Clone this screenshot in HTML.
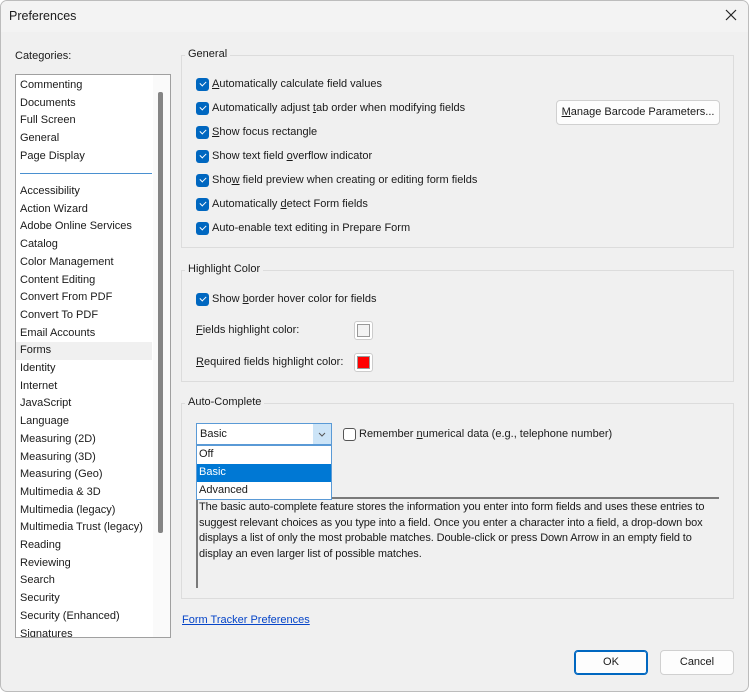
<!DOCTYPE html>
<html><head><meta charset="utf-8"><style>
*{box-sizing:border-box;margin:0;padding:0}
body{width:750px;height:693px;background:#fff;font-family:"Liberation Sans",sans-serif;font-size:11px;color:#1a1a1a;position:relative;overflow:hidden}
.win{position:absolute;left:0;top:0;width:749px;height:692px;background:#f0f0f0;border:1px solid #bcbcbc;border-radius:7px;overflow:hidden}
.title{position:absolute;left:0;top:0;width:100%;height:31px;background:#f3f3f3}
.a{position:absolute;white-space:nowrap}
.grp{position:absolute;border:1px solid #dcdcdc}
.gl{position:absolute;background:#f0f0f0;padding:0 3px;white-space:nowrap}
.cb{position:absolute;width:13px;height:13px;background:#0067c0;border-radius:3px}
.cb::after{content:"";position:absolute;left:3.5px;top:2.5px;width:5px;height:3px;border-left:1.3px solid #fff;border-bottom:1.3px solid #fff;transform:rotate(-45deg)}
.list{position:absolute;left:14px;top:73px;width:156px;height:564px;background:#fff;border:1px solid #a0a0a0;overflow:hidden}
.list div{position:absolute;left:4px;white-space:nowrap}
u{text-decoration:underline}
.btn{position:absolute;background:#fdfdfd;border:1px solid #d0d0d0;border-radius:4px;text-align:center}
</style></head><body>
<div class="win">
<div class="title"></div>
<div class="a" style="left:8px;top:8px;font-size:12.5px">Preferences</div>
<svg class="a" style="left:723px;top:7px" width="14" height="14" viewBox="0 0 14 14"><path d="M2 2L12 12M12 2L2 12" stroke="#222" stroke-width="1.2"/></svg>
<div class="a" style="left:14px;top:49px">Categories:</div>
<div class="list">
<div style="top:4px">Commenting</div><div style="top:21.7px">Documents</div><div style="top:39.4px">Full Screen</div><div style="top:57px">General</div><div style="top:74.8px">Page Display</div>
<div style="left:4px;top:98px;width:132px;height:1px;background:#4a90d0"></div>
<div style="top:110px">Accessibility</div><div style="top:127.7px">Action Wizard</div><div style="top:145.4px">Adobe Online Services</div><div style="top:163.1px">Catalog</div><div style="top:180.8px">Color Management</div><div style="top:198.5px">Content Editing</div><div style="top:216.2px">Convert From PDF</div><div style="top:233.9px">Convert To PDF</div><div style="top:251.6px">Email Accounts</div>
<div style="left:0;top:267px;width:136px;height:18px;background:#f0f0f0"></div><div style="top:269.3px">Forms</div>
<div style="top:287px">Identity</div><div style="top:304.7px">Internet</div><div style="top:322.4px">JavaScript</div><div style="top:340.1px">Language</div><div style="top:357.8px">Measuring (2D)</div><div style="top:375.5px">Measuring (3D)</div><div style="top:393.2px">Measuring (Geo)</div><div style="top:410.9px">Multimedia &amp; 3D</div><div style="top:428.6px">Multimedia (legacy)</div><div style="top:446.3px">Multimedia Trust (legacy)</div><div style="top:464px">Reading</div><div style="top:481.7px">Reviewing</div><div style="top:499.4px">Search</div><div style="top:517.1px">Security</div><div style="top:534.8px">Security (Enhanced)</div><div style="top:552.5px">Signatures</div>
<div style="left:137px;top:0;width:18px;height:564px;background:#fafafa"></div>
<div style="left:142px;top:17px;width:5px;height:441px;background:#858585;border-radius:2px"></div>
</div>

<div class="grp" style="left:180px;top:54px;width:553px;height:193px"></div>
<div class="gl" style="left:184px;top:47px">General</div>
<div class="cb" style="left:195px;top:77px"></div><div class="a" style="left:211px;top:77px"><u>A</u>utomatically calculate field values</div>
<div class="cb" style="left:195px;top:101px"></div><div class="a" style="left:211px;top:101px">Automatically adjust <u>t</u>ab order when modifying fields</div>
<div class="cb" style="left:195px;top:125px"></div><div class="a" style="left:211px;top:125px"><u>S</u>how focus rectangle</div>
<div class="cb" style="left:195px;top:149px"></div><div class="a" style="left:211px;top:149px">Show text field <u>o</u>verflow indicator</div>
<div class="cb" style="left:195px;top:173px"></div><div class="a" style="left:211px;top:173px">Sho<u>w</u> field preview when creating or editing form fields</div>
<div class="cb" style="left:195px;top:197px"></div><div class="a" style="left:211px;top:197px">Automatically <u>d</u>etect Form fields</div>
<div class="cb" style="left:195px;top:221px"></div><div class="a" style="left:211px;top:221px">Auto-enable text editing in Prepare Form</div>
<div class="btn" style="left:555px;top:99px;width:164px;height:25px;line-height:23px"><u>M</u>anage Barcode Parameters...</div>

<div class="grp" style="left:180px;top:269px;width:553px;height:112px"></div>
<div class="gl" style="left:184px;top:262px">Highlight Color</div>
<div class="cb" style="left:195px;top:292px"></div><div class="a" style="left:211px;top:292px">Show <u>b</u>order hover color for fields</div>
<div class="a" style="left:195px;top:323px"><u>F</u>ields highlight color:</div>
<div class="a" style="left:353px;top:320px;width:19px;height:19px;border:1px solid #ccc;border-radius:3px;background:#fff;padding:2px"><div style="width:13px;height:13px;border:1px solid #999;background:#f3f3f3"></div></div>
<div class="a" style="left:195px;top:355px"><u>R</u>equired fields highlight color:</div>
<div class="a" style="left:353px;top:352px;width:19px;height:19px;border:1px solid #ccc;border-radius:3px;background:#fff;padding:2px"><div style="width:13px;height:13px;border:1px solid #999;background:#f00"></div></div>

<div class="grp" style="left:180px;top:402px;width:553px;height:196px"></div>
<div class="gl" style="left:184px;top:395px">Auto-Complete</div>
<div class="a" style="left:195px;top:496px;width:523px;height:91px;border-left:2px solid #7a7a7a;border-top:2px solid #7a7a7a;background:#f0f0f0;padding:1px 0 0 1px;line-height:15.6px;letter-spacing:-0.1px">The basic auto-complete feature stores the information you enter into form fields and uses these entries to<br>suggest relevant choices as you type into a field. Once you enter a character into a field, a drop-down box<br>displays a list of only the most probable matches. Double-click or press Down Arrow in an empty field to<br>display an even larger list of possible matches.</div>
<div class="a" style="left:195px;top:422px;width:136px;height:22px;border:1px solid #5a9ad6;background:#fff"><span style="position:absolute;left:3px;top:4px">Basic</span><div style="position:absolute;right:0;top:0;width:18px;height:20px;background:#cce4f7"><svg width="18" height="20"><path d="M6 9L9 12L12 9" stroke="#555" fill="none"/></svg></div></div>
<div class="a" style="left:195px;top:444px;width:136px;height:55px;border:1px solid #5a9ad6;background:#fff">
<div style="position:absolute;left:2px;top:2px">Off</div>
<div style="position:absolute;left:0;top:18px;width:134px;height:18px;background:#0078d4;color:#fff;padding:2px 0 0 2px">Basic</div>
<div style="position:absolute;left:2px;top:38px">Advanced</div></div>
<div class="a" style="left:342px;top:427px;width:13px;height:13px;border:1px solid #555;border-radius:3px;background:#fff"></div>
<div class="a" style="left:358px;top:427px">Remember <u>n</u>umerical data (e.g., telephone number)</div>

<div class="a" style="left:181px;top:613px;color:#0645c8;text-decoration:underline">Form Tracker Preferences</div>
<div class="btn" style="left:573px;top:649px;width:74px;height:25px;line-height:23px;border:1px solid #0067c0;box-shadow:inset 0 0 0 1px #0067c0">OK</div>
<div class="btn" style="left:659px;top:649px;width:74px;height:25px;line-height:23px">Cancel</div>
</div>
</body></html>
